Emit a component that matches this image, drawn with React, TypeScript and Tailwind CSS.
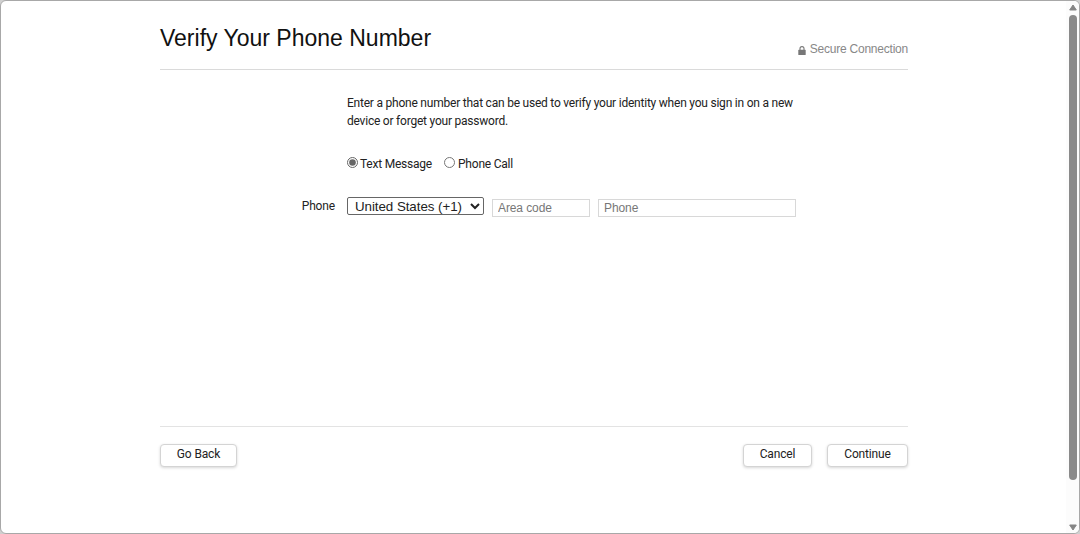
import * as React from 'react';

const BUTTON_CLASS =
  'h-[23px] rounded-[4px] border border-[#d4d4d4] bg-white pb-[3px] text-[12px] leading-[18px] tracking-[-0.15px] text-[#222] shadow-[0_1px_3px_rgba(0,0,0,0.16)]';

function LockIcon() {
  return (
    <svg className="mt-[2px] mr-[4px] h-[9px] w-[8px]" viewBox="0 0 8 9">
      <path d="M2 4V2.6a2 2 0 0 1 4 0V4" fill="none" stroke="#777" strokeWidth="1.1" />
      <rect x="0.3" y="3.8" width="7.4" height="5.2" rx="0.6" fill="#777" />
    </svg>
  );
}

function Scrollbar() {
  return (
    <div className="flex w-[13px] flex-col items-center bg-[#fcfcfc] pt-[3px] pb-[2px]">
      <svg className="h-[7px] w-[8px]" viewBox="0 0 8 7">
        <path d="M4 1 7.3 6H0.7Z" fill="#858585" stroke="#858585" strokeLinejoin="round" />
      </svg>
      <div className="mt-[4px] h-[465px] w-[8px] rounded-full bg-[#8a8a8a]" />
      <svg className="mt-auto h-[7px] w-[8px]" viewBox="0 0 8 7">
        <path d="M4 6 0.7 1H7.3Z" fill="#858585" stroke="#858585" strokeLinejoin="round" />
      </svg>
    </div>
  );
}

function PhoneForm() {
  const [method, setMethod] = React.useState('text');

  return (
    <form className="h-[357px] border-b border-[#e3e3e3] pt-[24px]">
      <p className="ml-[187px] w-[460px] text-[12px] leading-[18px] tracking-[-0.22px]">
        Enter a phone number that can be used to verify your identity when you
        sign in on a new
        <br />
        device or forget your password.
      </p>
      <div className="mt-[24px] ml-[187px] flex h-[18px] items-start text-[12px] leading-[20px] tracking-[-0.22px]">
        <label className="flex items-start">
          <input
            type="radio"
            name="method"
            className="mt-[3px] mr-[2px] h-[11px] w-[11px] accent-[#666]"
            checked={method === 'text'}
            onChange={() => setMethod('text')}
          />
          Text Message
        </label>
        <label className="ml-[12px] flex items-start">
          <input
            type="radio"
            name="method"
            className="mt-[3px] mr-[3px] h-[11px] w-[11px]"
            checked={method === 'call'}
            onChange={() => setMethod('call')}
          />
          Phone Call
        </label>
      </div>
      <div className="mt-[24px] flex items-start">
        <span className="mr-[12px] w-[175px] text-right text-[12px] leading-[20px] tracking-[-0.15px]">
          Phone
        </span>
        <select className="mt-[1px] h-[18px] w-[137px] rounded-[2px] border border-[#666] bg-white pl-[3px] font-['Liberation_Sans',sans-serif] text-[13.33px] leading-[16px] tracking-[-0.05px] text-[#222]">
          <option>United States (+1)</option>
        </select>
        <input
          type="text"
          placeholder="Area code"
          className="mt-[3px] ml-[8px] h-[18px] w-[98px] border border-[#d8d8d8] px-[5px] font-['Liberation_Sans',sans-serif] text-[12px] tracking-[-0.1px] placeholder:text-[#777]"
        />
        <input
          type="text"
          placeholder="Phone"
          className="mt-[3px] ml-[8px] h-[18px] w-[198px] border border-[#d8d8d8] px-[5px] font-['Liberation_Sans',sans-serif] text-[12px] tracking-[-0.1px] placeholder:text-[#777]"
        />
      </div>
    </form>
  );
}

export default function App() {
  return (
    <div className="h-[534px] w-[1080px] overflow-hidden bg-[#d0d0d0] font-['Roboto',sans-serif] text-[#222]">
      <div className="flex h-full overflow-hidden rounded-[6px] border border-[#a8a8a8] bg-white">
        <main className="mr-auto ml-[159px] w-[748px]">
          <header className="flex h-[69px] justify-between border-b border-[#dadada] font-['Liberation_Sans',sans-serif]">
            <h1 className="pt-[23px] text-[23px] leading-[28px] text-[#111]">
              Verify Your Phone Number
            </h1>
            <div className="mt-[39px] flex h-[18px] items-center text-[12px] tracking-[-0.22px] text-[#888]">
              <LockIcon />
              Secure Connection
            </div>
          </header>
          <PhoneForm />
          <footer className="flex pt-[17px]">
            <button className={`${BUTTON_CLASS} mr-auto w-[77px]`}>Go Back</button>
            <button className={`${BUTTON_CLASS} mr-[15px] w-[69px]`}>Cancel</button>
            <button className={`${BUTTON_CLASS} w-[81px]`}>Continue</button>
          </footer>
        </main>
        <Scrollbar />
      </div>
    </div>
  );
}
